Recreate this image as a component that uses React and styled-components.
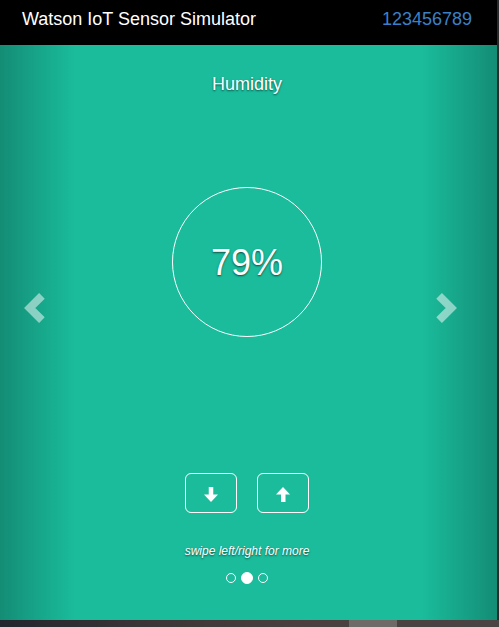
import React from "react";
import styled, { createGlobalStyle } from "styled-components";

const Global = createGlobalStyle`
  html, body { margin: 0; padding: 0; }
  body {
    font-family: "Liberation Sans", Arial, sans-serif;
    background: #2c2c2c;
    overflow: hidden;
  }
`;

const Page = styled.div`
  width: 499px;
  height: 627px;
  display: flex;
  flex-direction: column;
`;

const Main = styled.div`
  display: flex;
  flex-direction: column;
  border-right: 2px solid #2b2b2b;
`;

const Header = styled.header`
  box-sizing: border-box;
  height: 45px;
  background: #000;
  display: flex;
  justify-content: space-between;
  align-items: flex-start;
  padding: 9px 25px 0 22px;
  font-size: 18px;
  line-height: 20px;
`;

const Title = styled.div`
  color: #fff;
`;

const DeviceId = styled.a`
  color: #3a80c9;
  text-decoration: none;
`;

const Carousel = styled.div`
  position: relative;
  height: 575px;
  background: #1abc9c;
  overflow: hidden;
`;

const Slide = styled.div`
  display: flex;
  flex-direction: column;
  align-items: center;
  padding: 29px 3px 0 0;
  color: #fff;
  text-shadow: 0 1px 2px rgba(0, 0, 0, 0.6);
`;

const Label = styled.div`
  font-size: 18px;
  line-height: 20px;
`;

const Gauge = styled.div`
  box-sizing: border-box;
  margin-top: 93px;
  width: 150px;
  height: 150px;
  border: 1px solid #fff;
  border-radius: 50%;
  display: flex;
  align-items: center;
  justify-content: center;
  font-size: 36px;
  line-height: 40px;
  padding-top: 2px;
`;

const Buttons = styled.div`
  display: flex;
  gap: 20px;
  margin-top: 136px;
`;

const StepButton = styled.button`
  box-sizing: border-box;
  width: 52px;
  height: 40px;
  border: 1px solid #fff;
  border-radius: 6px;
  background: transparent;
  display: flex;
  align-items: center;
  justify-content: center;
  padding: 3px 0 0 0;
  cursor: pointer;
`;

const Hint = styled.div`
  margin-top: 31px;
  font-size: 12px;
  line-height: 14px;
  font-style: italic;
`;

const Indicators = styled.ol`
  list-style: none;
  margin: 14px 0 0 0;
  padding: 0;
  display: flex;
  align-items: center;
  gap: 4px;
  height: 12px;
  text-shadow: none;
`;

const Dot = styled.li`
  box-sizing: border-box;
  width: ${(p) => (p.$active ? "12px" : "10px")};
  height: ${(p) => (p.$active ? "12px" : "10px")};
  margin: ${(p) => (p.$active ? "0" : "1px")};
  border: 1px solid #fff;
  border-radius: 50%;
  background: ${(p) => (p.$active ? "#fff" : "transparent")};
`;

const Control = styled.a`
  position: absolute;
  top: 0;
  bottom: 0;
  width: 15%;
  ${(p) => (p.$side === "left" ? "left: 0;" : "right: 0;")}
  background: linear-gradient(
    ${(p) => (p.$side === "left" ? "to right" : "to left")},
    rgba(0, 0, 0, 0.25) 0,
    rgba(0, 0, 0, 0) 100%
  );
`;

const ChevronIcon = styled.svg`
  position: absolute;
  top: 248px;
  ${(p) => (p.$side === "left" ? "left: 24px;" : "left: 13.5px;")}
  opacity: 0.5;
`;

const BottomBar = styled.div`
  height: 7px;
  display: flex;
  background: linear-gradient(to right, #22252d 0%, #3b3537 30%, #4a3f3e 60%, #4a4444 100%);
`;

const Thumb = styled.div`
  margin-left: 349px;
  width: 48px;
  height: 7px;
  background: #6e6a68;
`;

function Chevron({ side }) {
  const pts =
    side === "left"
      ? "17.9,2.8 5.7,15 17.9,27.2"
      : "3.1,2.8 15.3,15 3.1,27.2";
  return (
    <ChevronIcon $side={side} width="21" height="30" viewBox="0 0 21 30">
      <polyline
        points={pts}
        fill="none"
        stroke="#fff"
        strokeWidth="8"
        strokeLinecap="butt"
        strokeLinejoin="miter"
      />
    </ChevronIcon>
  );
}

function Arrow({ up }) {
  return (
    <svg width="14" height="15" viewBox="0 0 14 15">
      {up ? (
        <g fill="#fff">
          <polygon points="0,7.5 7,0 14,7.5" />
          <rect x="5" y="7" width="4.5" height="8" />
        </g>
      ) : (
        <g fill="#fff">
          <rect x="4.75" y="0" width="4.5" height="8" />
          <polygon points="0,7.5 14,7.5 7,15" />
        </g>
      )}
    </svg>
  );
}

export default function App() {
  return (
    <>
      <Global />
      <Page>
        <Main>
          <Header>
            <Title>Watson IoT Sensor Simulator</Title>
            <DeviceId href="#">123456789</DeviceId>
          </Header>
          <Carousel>
            <Slide>
              <Label>Humidity</Label>
              <Gauge>79%</Gauge>
              <Buttons>
                <StepButton aria-label="decrease">
                  <Arrow />
                </StepButton>
                <StepButton aria-label="increase">
                  <Arrow up />
                </StepButton>
              </Buttons>
              <Hint>swipe left/right for more</Hint>
              <Indicators>
                <Dot />
                <Dot $active />
                <Dot />
              </Indicators>
            </Slide>
            <Control $side="left" href="#">
              <Chevron side="left" />
            </Control>
            <Control $side="right" href="#">
              <Chevron side="right" />
            </Control>
          </Carousel>
        </Main>
        <BottomBar>
          <Thumb />
        </BottomBar>
      </Page>
    </>
  );
}
